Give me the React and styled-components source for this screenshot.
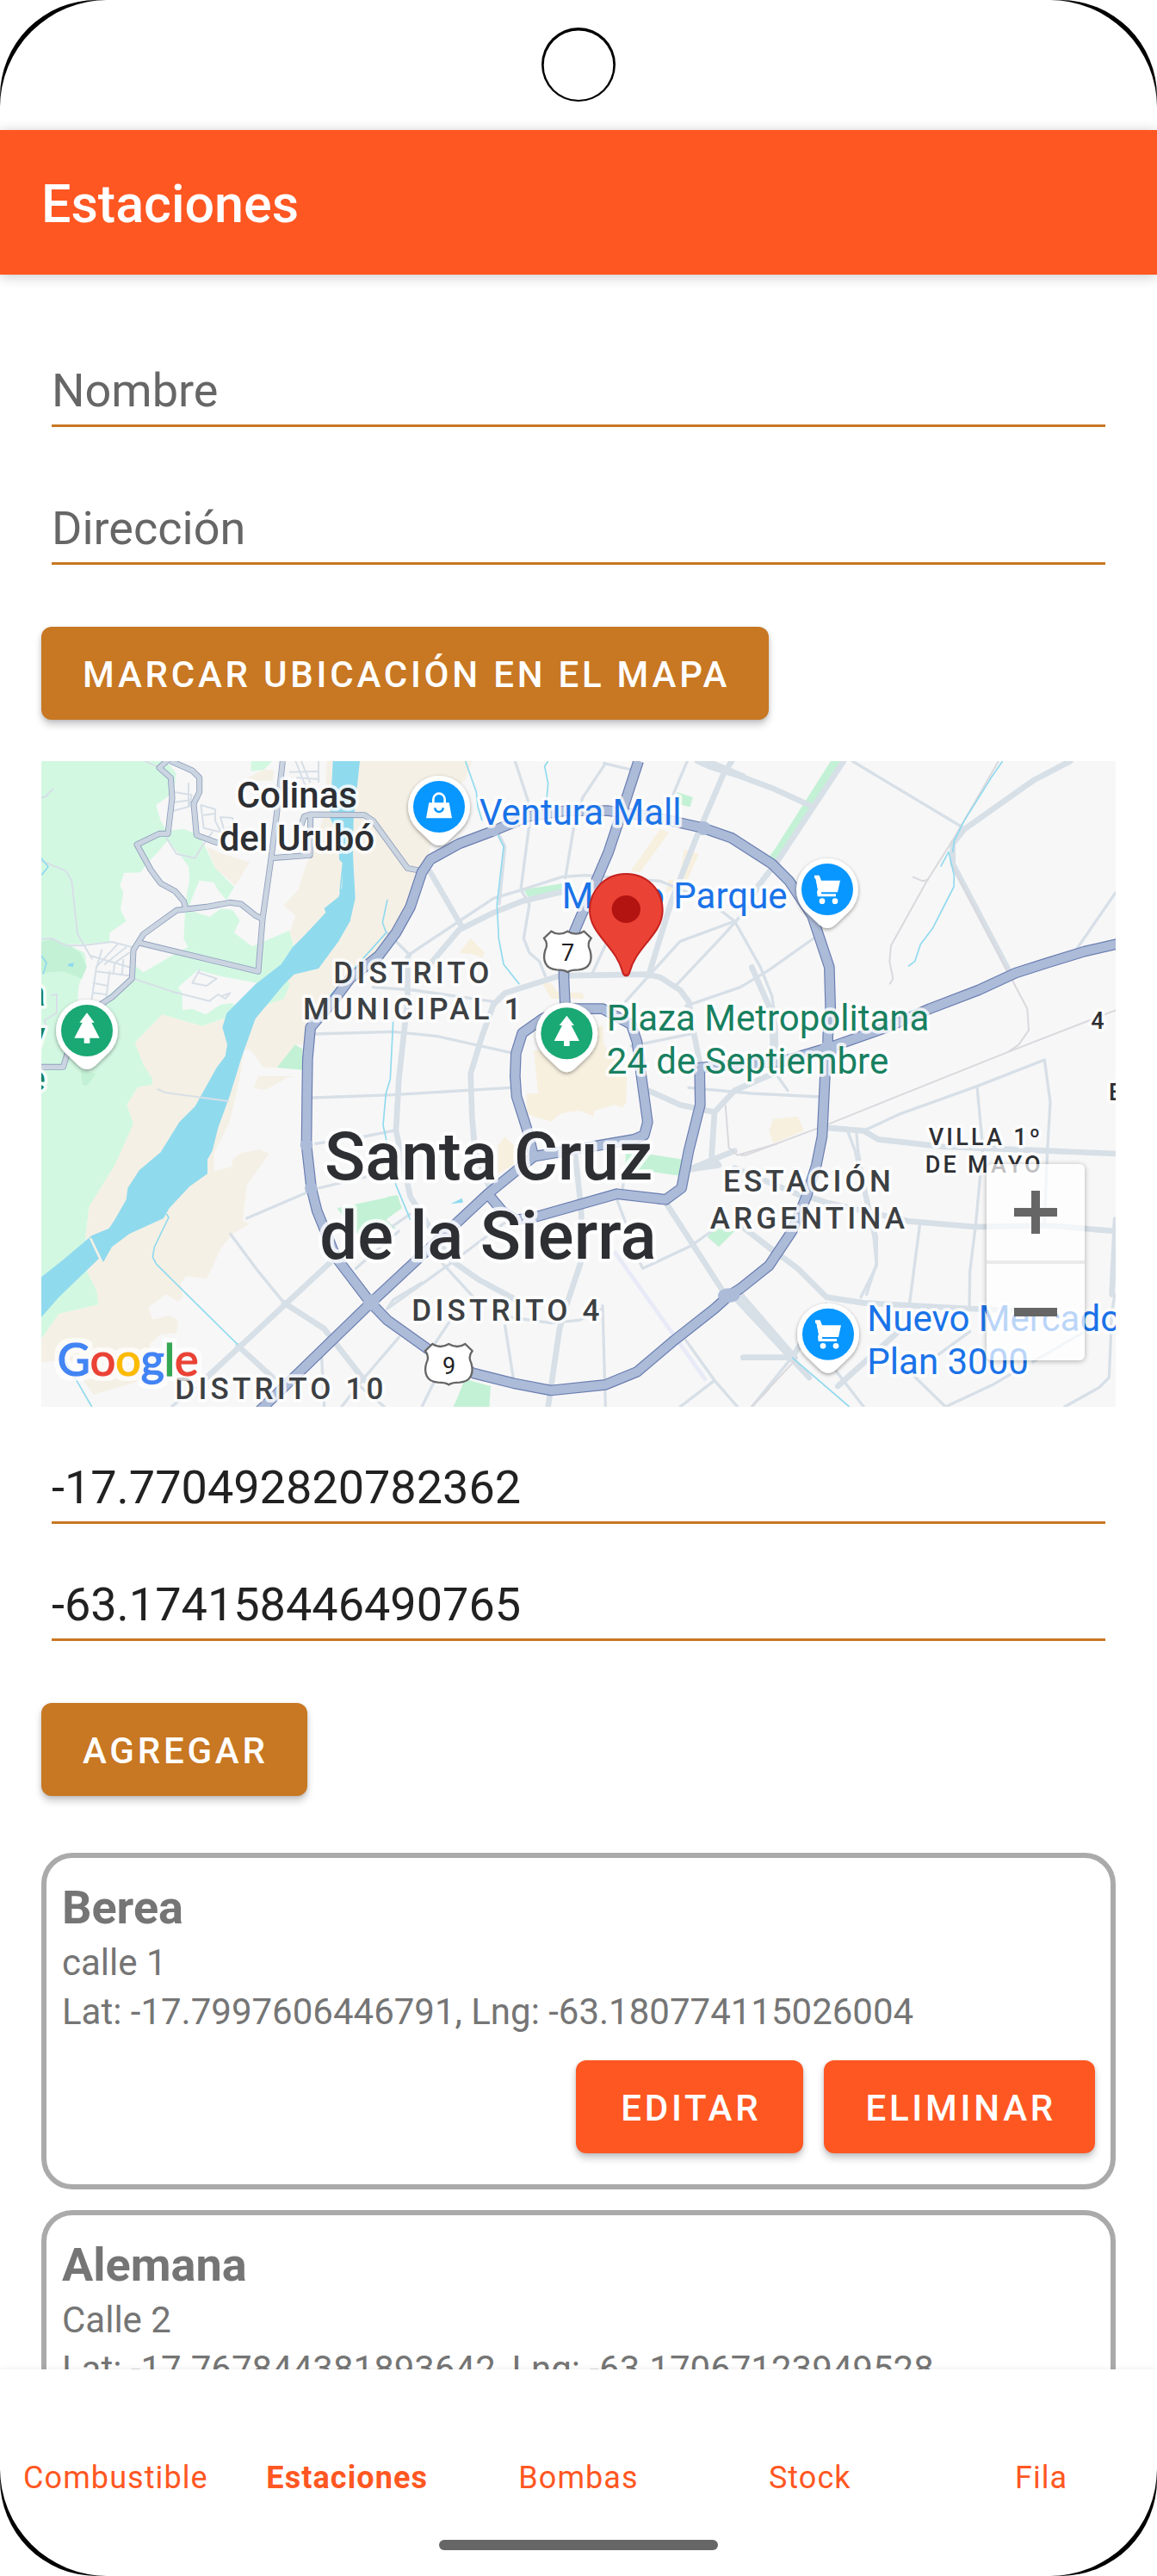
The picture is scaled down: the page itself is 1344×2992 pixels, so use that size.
import React, { useState } from "react";
import styled, { createGlobalStyle, css } from "styled-components";

const GlobalStyle = createGlobalStyle`
  *, *::before, *::after { box-sizing: border-box; }
  html, body { margin: 0; background: #fff; }
  body { font-family: Roboto, "Noto Sans", sans-serif; color: #212121; }
`;

const orange = "#ff5722";
const ochre = "#c87722";

/* ---------- Device shell ---------- */

const Device = styled.div`
  position: relative;
  display: flex;
  flex-direction: column;
  height: 100vh;
  overflow: hidden;
  background: #fff;
`;

const StatusBar = styled.div`
  flex: none;
  height: 151px;
  padding-top: 31px;
  display: flex;
  justify-content: center;
  align-items: flex-start;
`;

const CornerSvg = styled.svg`
  position: absolute;
  z-index: 3;
  width: 130px;
  height: 130px;
  pointer-events: none;
  ${(p) => (p.$bottom ? "bottom: 0;" : "top: 0;")}
  ${(p) => (p.$right ? "right: 0;" : "left: 0;")}
  transform: scale(${(p) => (p.$right ? -1 : 1)}, ${(p) => (p.$bottom ? -1 : 1)});
`;

const Corner = (props) => (
  <CornerSvg viewBox="0 0 130 130" aria-hidden="true" {...props}>
    <path d="M0 112A112 112 0 0 1 112 0H126A125 125 0 0 0 0 126Z" fill="#000" />
  </CornerSvg>
);

const AppBar = styled.header`
  flex: none;
  position: relative;
  z-index: 1;
  display: flex;
  align-items: center;
  height: 168px;
  padding: 4px 48px 0;
  background: ${orange};
  box-shadow: 0 2px 14px rgba(0, 0, 0, 0.22);
`;

const Title = styled.h1`
  margin: 0;
  font-size: 61px;
  line-height: 72px;
  font-weight: 500;
  color: #fff;
`;

const Content = styled.main`
  flex: 1;
  min-height: 0;
  overflow-y: auto;
  scrollbar-width: none;
  padding: 102px 48px 48px;
`;

/* ---------- Form ---------- */

const Fields = styled.div`
  display: flex;
  flex-direction: column;
  gap: ${(p) => p.$gap}px;
  padding: 0 12px;
`;

const TextInput = styled.input`
  display: block;
  width: 100%;
  height: 75px;
  padding: 0 0 8px;
  border: 0;
  border-bottom: 3px solid ${ochre};
  border-radius: 0;
  outline: 0;
  background: transparent;
  font: 400 54px/64px Roboto, "Noto Sans", sans-serif;
  color: #212121;
  &::placeholder { color: #666; opacity: 1; }
`;

const Button = styled.button`
  display: inline-flex;
  align-items: center;
  justify-content: center;
  height: 108px;
  min-width: 264px;
  padding: 3px 45px 0 48px;
  border: 0;
  border-radius: 12px;
  background: ${(p) => (p.$accent ? orange : ochre)};
  box-shadow: 0 6px 8px rgba(0, 0, 0, 0.2), 0 1px 4px rgba(0, 0, 0, 0.12);
  color: #fff;
  font: 500 42px/48px Roboto, "Noto Sans", sans-serif;
  letter-spacing: 0.09em;
  text-transform: uppercase;
  white-space: nowrap;
  cursor: pointer;
`;

const ButtonRow = styled.div`
  display: flex;
  justify-content: ${(p) => (p.$end ? "flex-end" : "flex-start")};
  gap: 24px;
  margin-top: ${(p) => p.$top}px;
`;

/* ---------- Map ---------- */

const MapFrame = styled.section`
  position: relative;
  height: 750px;
  margin: 48px 0 61px;
  overflow: hidden;
  background: #f7f7f7;
`;

const MapSvg = styled.svg`
  display: block;
  width: 100%;
  height: 100%;
`;

const Lines = styled.g`
  fill: none;
  stroke-linejoin: round;
  stroke-linecap: ${(p) => (p.$round ? "round" : "butt")};
  stroke: ${(p) => p.$color};
  stroke-width: ${(p) => p.$width};
`;

const MapText = styled.text`
  font-family: Roboto, "Noto Sans", sans-serif;
  paint-order: stroke;
  stroke: rgba(255, 255, 255, 0.8);
  stroke-width: 22px;
  stroke-linejoin: round;
  ${(p) => p.$kind === "city" && css`font-size: 234px; font-weight: 500; fill: #2d2f33; stroke-width: 26px;`}
  ${(p) => p.$kind === "town" && css`font-size: 126px; font-weight: 500; fill: #2d2f33;`}
  ${(p) => p.$kind === "district" && css`font-size: 105px; font-weight: 500; fill: #3c4043; letter-spacing: 0.12em;`}
  ${(p) => p.$kind === "suburb" && css`font-size: 81px; font-weight: 500; fill: #2d2f33; letter-spacing: 0.12em;`}
  ${(p) => p.$kind === "shop" && css`font-size: 126px; fill: #1a73e8;`}
  ${(p) => p.$kind === "park" && css`font-size: 126px; fill: #188060;`}
  ${(p) => p.$kind === "reserve" && css`font-size: 126px; font-weight: 500; fill: #188060;`}
`;

const ShieldText = styled.text`
  font: 400 81px Roboto, "Noto Sans", sans-serif;
  fill: #202124;
`;

const LogoText = styled.text`
  font: 400 156px Lato, Inter, sans-serif;
  stroke-width: 5px;
`;

const ZoomControls = styled.div`
  position: absolute;
  right: 36px;
  bottom: 54px;
  width: 114px;
  display: flex;
  flex-direction: column;
  border-radius: 6px;
  overflow: hidden;
  box-shadow: 0 1px 6px rgba(0, 0, 0, 0.3);
`;

const ZoomButton = styled.button`
  display: flex;
  align-items: center;
  justify-content: center;
  height: ${(p) => (p.$divided ? 116 : 112)}px;
  padding: 0;
  border: 0 solid rgba(230, 230, 230, 0.8);
  border-top-width: ${(p) => (p.$divided ? 4 : 0)}px;
  background: rgba(255, 255, 255, 0.7);
  background-clip: padding-box;
  cursor: pointer;
`;

const sand = [
  "1020,42 1525,42 1500,110 1420,160 1370,390 1340,430 1300,545 1240,650 1100,820 950,950 940,1030 908,1030 845,1110 798,1110 750,1045 730,1050 715,1150 680,1300 625,1410 625,1470 690,1455 690,1430 720,1408 785,1395 818,1410 740,1520 725,1640 750,1655 690,1690 650,1740 600,1846 530,1837 510,1860 518,1910 500,1925 460,1900 397,1945 412,1988 470,1975 500,1990 495,2035 440,2040 400,2075 440,2180 205,2250 165,2190 160,2130 24,2135 24,2055 85,1968 222,1936 185,1825 178,1700 190,1595 345,1306 322,1240 360,1178 412,1165 380,1100 350,1022 445,925 585,965 655,940 700,930 830,870 900,720 910,690 890,640 910,580 868,545 920,490 935,440 1010,230",
  "735,105 800,70 835,75 830,110 770,110",
  "600,340 640,360 750,395 700,475 630,415",
  "780,1140 915,1140 880,1145 830,1175 800,1187 765,1182",
];

const green = [
  "24,42 460,42 494,85 486,150 424,195 440,250 462,285 520,278 575,300 600,350 630,415 696,480 672,522 640,552 690,560 716,596 696,640 758,688 888,632 905,690 890,730 880,800 890,820 870,870 700,930 655,940 585,965 445,925 350,1022 380,1100 412,1150 410,1170 360,1178 322,1240 345,1306 280,1450 190,1595 178,1700 185,1825 218,1890 222,1936 85,1968 24,2055",
  "755,42 828,42 800,72 755,78",
];

const clearings = [
  "462,320 430,360 395,395 370,430 312,432 298,475 310,500 300,560 320,600 262,640 262,672 340,690 330,740 380,778 470,725 535,690 520,660 525,570 530,510 540,460 538,410 505,365",
  "575,458 625,464 640,492 668,525 690,560 650,556 610,585 538,560 545,530",
  "570,770 500,830 515,850 516,910 550,905 597,925 650,890 690,885 705,905 770,890 780,870 830,850 800,820 640,790",
  "115,680 165,680 262,672 340,690 340,790 230,880 150,880 155,820 182,760 175,710",
];

const parks = [
  "24,672 60,662 115,680 160,710 182,760 165,800 100,775 24,780",
  "845,1110 908,1030 934,1045 934,1118",
  "160,1120 215,1130 185,1172 168,1172",
  "1705,490 1840,468 1840,495 1720,515",
  "2240,150 2294,168 2285,202 2238,190",
  "2560,375 2580,350 2590,385",
  "2775,42 2830,42 2590,395 2558,384",
  "2060,1410 2130,1410 2260,1430 2250,1487 2060,1460",
  "1055,1600 1265,1555 1280,1600 1225,1640 1260,1670 1120,1690",
  "1230,1560 1265,1555 1280,1600 1230,1632",
  "2345,1700 2370,1670 2440,1680 2385,1735",
  "1395,2212 1470,2270 1500,2195 1590,2220 1585,2300 1455,2300 1470,2270",
];

const urban = [
  "1740,1050 1830,1050 1980,960 1985,1030 2065,1140 2062,1230 2050,1250 2020,1240 1950,1260 1950,1280 1900,1260 1835,1270 1800,1298 1740,1280 1715,1270 1715,1200 1755,1200",
  "1480,710 1520,660 1570,710 1560,728 1530,715",
  "1770,815 1800,815 1820,845 1910,850 1915,870 1800,870",
  "2180,280 2212,290 2110,430 2078,425",
  "2265,350 2315,365 2270,470 2200,500 2210,455 2245,455",
  "1615,1380 1640,1350 1670,1380 1670,1450 1615,1480",
  "2560,1330 2575,1290 2660,1280 2682,1330 2575,1375",
];

const river =
  "M1040,42 L1030,240 1060,300 1062,385 1075,400 1072,480 1060,515 1010,555 1015,570 940,650 900,690 860,750 770,820 670,920 655,970 672,1030 665,1070 635,1110 585,1200 560,1245 505,1300 440,1405 365,1468 325,1530 320,1570 280,1640 260,1670 200,1695 100,1780 24,1840 V1980 L85,1910 225,1775 240,1788 270,1735 330,1690 450,1635 470,1600 540,1525 603,1480 603,1430 620,1400 640,1320 680,1210 702,1140 720,1080 770,940 870,820 905,785 990,765 1060,670 1100,600 1118,520 1110,370 1112,250 1134,42Z";

const streams = [
  "1075,400 1065,500",
  "24,380 48,410 24,440",
  "24,720 42,745 30,785",
  "1230,525 1213,605 1226,640 1150,725 1030,860",
  "460,1620 468,1632 418,1735 412,1770 425,1795 708,2075",
  "90,2100 135,2180 200,2292",
  "1502,42 1540,150 1545,200 1560,250",
  "1790,42 1778,60 1790,120 1785,175",
  "1615,300 1635,340 1612,540 1618,660 1635,750 1690,820",
  "1250,950 1240,1150 1225,1200 1215,1310 1260,1520 1310,1640",
  "3374,42 3334,100 3240,250 3205,320 3200,360",
  "3158,410 3186,358 3205,440 3204,480 3130,625 3088,680 3068,740 3045,757",
  "2640,2120 2840,2292",
];

const lanes = [
  "24,390 110,425 130,460 150,645 200,730",
  "24,662 60,660 110,685 165,685 270,672 340,690",
  "24,170 40,165 64,140",
  "385,42 430,62",
  "345,800 480,845 610,878 640,855 665,870 682,850 655,860",
  "537,120 537,200",
  "485,215 540,200 548,160 486,150",
  "490,185 545,178",
  "580,195 630,210 630,250 650,290 590,275 580,195",
  "590,230 630,225",
  "648,237 690,240 695,270 660,280 648,237",
  "460,310 495,365 560,380 580,345 620,290",
  "195,720 330,760",
  "235,700 215,765 200,870",
  "290,680 215,760",
  "320,690 245,750",
  "330,710 280,745 275,780",
  "262,775 250,870",
  "215,775 330,790",
  "205,815 255,825",
  "205,850 250,855",
  "310,735 305,785",
  "575,770 550,815 600,825 635,800 575,780",
  "60,858 78,855 78,920 35,945 45,975",
  "910,42 945,130",
  "930,42 960,115",
  "890,80 990,78",
  "990,42 990,115",
  "430,1185 455,1197 675,1227",
  "915,100 990,105",
];

const minor = [
  "1675,42 1720,180 1725,260 1695,490 1725,540 1705,660 1725,710 1760,740 1780,790",
  "1985,50 2080,72",
  "1990,50 1910,170 1880,270 1850,450",
  "2275,42 2225,160",
  "1620,300 1640,340 1620,540",
  "1300,720 1480,600 1600,520 1700,490 1840,445 1920,440 2180,460 2350,530 2440,600 2530,760 2570,860 2585,960 2590,1090",
  "2100,560 2010,640 1940,790",
  "2060,880 2250,670 2440,600",
  "2560,425 2480,560 2400,650 2230,830",
  "2270,895 2460,830 2560,770 2715,660",
  "2080,1035 2300,990",
  "970,993 1250,985 1400,1000 1670,1060",
  "970,1215 1250,1205 1660,1180",
  "980,1375 1150,1350 1250,1330",
  "990,1530 1200,1480",
  "1180,830 1320,840 1600,880",
  "1230,640 1310,720",
  "683,1690 780,1820 870,1930",
  "740,1635 950,1545",
  "480,2290 560,2225",
  "1000,2100 1010,2292",
  "1230,1950 1250,1920 1350,1860",
  "1270,2050 1150,2190 1070,2292",
  "1110,2200 1220,2292",
  "1120,1810 1270,1680",
  "1230,1950 1440,1800 1640,1650",
  "1230,1675 1310,1620",
  "1420,1790 1530,1910",
  "1640,2010 1670,2200",
  "1980,1940 1990,2292",
  "1390,2080 1450,1990",
  "1350,2292 1440,2110",
  "1660,1980 1800,2000 1900,1990 1980,1950",
  "2110,1790 2120,1810 2290,1730 2360,1680",
  "2270,2060 2370,2200 2450,2292",
  "2370,2200 2250,2292",
  "2480,1680 2580,1760",
  "2030,1570 2060,1650",
  "2060,1450 2050,1530",
  "2280,1180 2500,1200 2740,1212",
  "2590,1140 2625,1190",
  "2850,42 3230,270",
  "3768,500 3630,700",
  "2890,1330 3020,1270 3285,1175 3520,1083 3540,1230 3530,1400 3520,1650",
  "3285,1175 3305,1390 3280,1660 3260,1820 3258,1950",
  "3085,1660 3050,1930",
  "2760,1315 2830,1320 2860,1400 2880,1500 2925,1700 2935,1800 2880,1910",
  "2865,1340 2870,1400 2900,1550 2935,1700 2935,1790 2900,1900",
  "2640,2120 2500,2292",
  "2780,2150 2890,2292",
  "3060,2180 3175,2292 3340,2215 3450,2150",
  "3260,2030 3150,2110",
  "3480,2135 3660,2030",
  "3765,1900 3755,1960 3745,2190 3710,2225 3590,2292",
];

const streets = [
  "2430,42 2400,90 2310,300 2220,530 2140,790",
  "2310,42 2350,60 2460,95 2580,140 2700,195",
  "2345,42 2470,95",
  "2820,42 2590,390 2520,480",
  "1370,760 1480,630 1600,570 1700,530 1850,495",
  "1380,430 1490,620",
  "1300,730 1300,880 1270,1150 1260,1330 1310,1560 1450,1780 1550,1850 1680,1920",
  "1600,890 1560,1000 1520,1130 1525,1280 1535,1400 1590,1540",
  "1600,890 1640,850 1830,790 2130,785 2180,795 2250,840 2280,880 2300,1000 2320,1100",
  "600,2190 1030,1790",
  "870,1930 1010,2020 1150,2200",
  "710,2080 830,2190",
  "1885,1420 1905,1600 1910,1770 1860,1920 1830,2020 1790,2292",
  "2440,1400 2280,1465",
  "2140,1190 2250,1240 2370,1265 2440,1190 2530,1150 2600,1120",
  "2370,1265 2360,1420 2385,1450 2280,1465",
  "2200,1580 2400,1890",
  "2440,1910 2700,2190",
  "2440,1460 2680,1560",
  "2700,1560 2760,1580 3045,1645 3280,1665 3530,1660 3768,1680",
  "2760,1320 2890,1330 2940,1360 3160,1385 3530,1400 3768,1410",
  "2460,1660 2580,1750 2660,1810 2760,1910 2890,1930 3260,1950 3500,1960",
  "3768,1640 3755,1900",
  "3610,42 3480,110 3240,280 3200,330 3200,400 3400,780",
  "2460,1900 2650,2120",
  "2470,2120 2640,2120 2760,1940",
  "2800,2220 3010,2030",
  "2500,760 2570,920 2575,1090",
];

const rails = [
  "3360,42 3205,310 3110,460 2985,685 2980,740 2992,800 2980,820",
  "3060,445 3095,460 3115,455",
  "3195,400 3460,905 3465,980 3430,1030 3395,1055",
  "3768,910 3395,1055 3020,1205 2760,1310 2480,1415 2460,1415",
  "2408,1240 2420,1390 2450,1415 2590,1375",
  "2660,2120 2500,2292",
  "2560,2230 2500,2292",
];

const secondary = [
  "475,30 435,65 475,100 480,170 465,295 435,295 357,333 405,420 440,468 490,495 520,530 528,558",
  "475,42 550,75 575,100 575,150 555,190 565,300 640,328",
  "230,890 270,865 340,800 345,700 380,645 495,562 600,550 680,535 720,540 770,580 795,592",
  "365,675 780,775 795,592 825,380 845,220 865,42",
  "825,380 960,370 962,230",
  "930,265 940,235 962,228 1150,230 1180,250 1300,415 1350,425",
  "24,1108 100,1108 115,1060",
];

const highways = [
  "950,1200 952,1080 962,970 1040,880 1100,800 1200,720 1260,640 1310,550 1350,430 1380,385 1480,330 1600,285 1720,235 1850,215 2000,215 2150,235 2330,275 2430,310 2570,400 2630,460 2710,580 2770,760 2774,900 2765,1000 2765,1050 2755,1140 2745,1350 2725,1450 2690,1560 2640,1680 2560,1800 2460,1880 2420,1905 2370,1950 2230,2060 2100,2170 1990,2215 1800,2235 1670,2210 1530,2175 1370,2090 1230,1990 1172,1930 1050,1770 985,1610 965,1530 948,1380 950,1200",
  "2105,42 2060,180 2000,360 1880,640 1845,720 1845,800 1850,905",
  "1850,905 1890,905 1980,905 2080,960 2100,1020 2115,1140 2137,1300 2125,1345 2090,1360 1740,1420 1715,1320 1680,1210 1675,1140 1678,1060 1700,990 1770,940 1850,905",
  "1740,1420 1580,1550 1172,1930 780,2310",
  "1580,1550 1630,1610 1680,1640 1740,1632 2030,1550 2200,1570 2255,1530 2280,1400 2320,1240 2318,1110 2500,1095 2600,1090 2770,1040 2970,970 3120,905 3290,840 3420,780 3530,745 3660,705 3790,675",
];

const polyline = (points) => <polyline key={points} points={points} />;
const polygon = (points) => <polygon key={points} points={points} />;

const pinShapes = {
  tree: (
    <path d="M0-62L26-28H16L44 26H10V44H-10V26H-44L-16-28H-26Z" fill="#fff" />
  ),
  bag: (
    <g>
      <path d="M-20-12V-26A20 20 0 0 1 20-26V-12" fill="none" stroke="#fff" strokeWidth="8" />
      <path d="M-35-14H35L45 40H-45Z" fill="#fff" />
      <path d="M-14 4A14 14 0 0 0 14 4" fill="none" stroke="#0896ff" strokeWidth="8" />
    </g>
  ),
  cart: (
    <g fill="#fff">
      <path d="M-45-49H-28L-21-31H45L36 10H-22L-24 16H30V25H-34L-36 8-33 0-40-38H-45Z" />
      <path d="M-38-45L-24 20" stroke="#fff" strokeWidth="9" />
      <circle cx="-18" cy="41" r="10" />
      <circle cx="27" cy="41" r="10" />
    </g>
  ),
};

const Poi = ({ x, y, icon }) => (
  <g transform={`translate(${x} ${y})`}>
    <path
      d="M-76 77A108 108 0 1 1 76 77L28 123Q0 147-28 123Z"
      fill="#fff"
      filter="url(#poiShadow)"
    />
    <circle r="90" fill={icon === "tree" ? "#1aa874" : "#0896ff"} />
    {pinShapes[icon]}
  </g>
);

const Shield = ({ x, y, number }) => (
  <g transform={`translate(${x} ${y})`}>
    <path
      d="M-57-70Q-30-52 0-70Q30-52 57-70L82-46Q66-26 78-4C88 30 78 62 38 64Q12 64 0 72Q-12 64-38 64C-78 62-88 30-78-4Q-66-26-82-46Z"
      fill="#fff"
      stroke="#666"
      strokeWidth="7"
    />
    <ShieldText x="-22" y="34">{number}</ShieldText>
  </g>
);

const labels = [
  ["town", 704, 205, "Colinas"],
  ["town", 644, 355, "del Urubó"],
  ["district", 1042, 815, "DISTRITO"],
  ["district", 936, 943, "MUNICIPAL 1"],
  ["shop", 1550, 265, "Ventura Mall"],
  ["shop", 1838, 554, "Macro Parque"],
  ["park", 1994, 981, "Plaza Metropolitana"],
  ["park", 1994, 1131, "24 de Septiembre"],
  ["city", 1011, 1500, "Santa Cruz"],
  ["city", 994, 1776, "de la Sierra"],
  ["district", 1315, 1993, "DISTRITO 4"],
  ["district", 490, 2265, "DISTRITO 10"],
  ["district", 2400, 1541, "ESTACIÓN"],
  ["district", 2354, 1670, "ARGENTINA"],
  ["suburb", 3116, 1379, "VILLA 1º"],
  ["suburb", 3104, 1475, "DE MAYO"],
  ["shop", 2902, 2028, "Nuevo Mercado"],
  ["shop", 2902, 2178, "Plan 3000"],
  ["suburb", 3682, 975, "4"],
  ["suburb", 3744, 1225, "B"],
];

const edgeLabels = [
  ["a", 893],
  ["y", 1040],
  ["e", 1190],
];

const logo = [
  ["G", "#4285f4"],
  ["o", "#ea4335"],
  ["o", "#fbbc05"],
  ["g", "#4285f4"],
  ["l", "#34a853"],
  ["e", "#ea4335"],
];

const StationMap = () => (
  <MapFrame aria-label="Mapa">
    <MapSvg viewBox="24 42 3744 2250" preserveAspectRatio="xMidYMid slice">
      <defs>
        <filter id="poiShadow" x="-20%" y="-20%" width="140%" height="150%">
          <feDropShadow dx="0" dy="5" stdDeviation="6" floodOpacity="0.4" />
        </filter>
        <filter id="logoHalo" x="-10%" y="-20%" width="120%" height="140%">
          <feMorphology in="SourceAlpha" operator="dilate" radius="14" result="grown" />
          <feFlood floodColor="#fff" floodOpacity="0.75" />
          <feComposite in2="grown" operator="in" result="halo" />
          <feMerge>
            <feMergeNode in="halo" />
            <feMergeNode in="SourceGraphic" />
          </feMerge>
        </filter>
      </defs>
      <g fill="#f5f0e5">{sand.map(polygon)}</g>
      <g fill="#d3f8e2">{green.map(polygon)}</g>
      <g fill="#f7f7f7">{clearings.map(polygon)}</g>
      <g fill="#c3f1d5">{parks.map(polygon)}</g>
      <g fill="#f7f0df">{urban.map(polygon)}</g>
      <path d={river} fill="#90daee" />
      <path d="M195 1704L236 1790" stroke="#f5f0e5" strokeWidth="8" />
      <path d="M120 748L138 745 134 760 115 755ZM1450 1585L1490 1565 1494 1580Z" fill="#90daee" />
      <Lines $color="#d7dfe7" $width={6} $round>{lanes.map(polyline)}</Lines>
      <Lines $color="#d7dfe7" $width={10} $round>{minor.map(polyline)}</Lines>
      <Lines $color="#d7dfe7" $width={20} $round>{streets.map(polyline)}</Lines>
      <Lines $color="#d9d9de" $width={6}>{rails.map(polyline)}</Lines>
      <Lines $color="#e8eaf8" $width={14}>{polyline("2020,1750 2340,2200")}</Lines>
      <Lines $color="#90daee" $width={5}>{streams.map(polyline)}</Lines>
      <Lines $color="#8f9ebd" $width={21}>{secondary.map(polyline)}</Lines>
      <Lines $color="#cbd5e1" $width={16}>{secondary.map(polyline)}</Lines>
      <Lines $color="#6a7db0" $width={38}>{highways.map(polyline)}</Lines>
      <Lines $color="#abbbd8" $width={31}>{highways.map(polyline)}</Lines>
      <g fill="#abbbd8">
        <circle cx="1174" cy="1928" r="28" />
        <circle cx="1600" cy="282" r="22" />
        <circle cx="2332" cy="276" r="24" />
        <circle cx="2765" cy="1050" r="32" />
        <ellipse cx="2420" cy="1904" rx="38" ry="25" />
        <circle cx="948" cy="1380" r="22" />
        <circle cx="964" cy="1530" r="22" />
      </g>

      {labels.map(([kind, x, y, text]) => (
        <MapText key={text} $kind={kind} x={x} y={y}>{text}</MapText>
      ))}
      {edgeLabels.map(([text, y]) => (
        <MapText key={text} $kind="reserve" x="38" y={y} textAnchor="end">{text}</MapText>
      ))}

      <Poi x={183} y={981} icon="tree" />
      <Poi x={1410} y={201} icon="bag" />
      <Poi x={2763} y={489} icon="cart" />
      <Poi x={1855} y={991} icon="tree" />
      <Poi x={2766} y={2039} icon="cart" />
      <Shield x={1858} y={705} number="7" />
      <Shield x={1444} y={2143} number="9" />

      <g transform="translate(2062 562)">
        <path
          d="M0-127C74-127 127-70 127 0C127 42 104 74 76 108C46 144 22 176 12 216Q8 228 0 228Q-8 228-12 216C-22 176-46 144-76 108C-104 74-127 42-127 0C-127-70-74-127 0-127Z"
          fill="#ea4335"
          stroke="#c5221f"
          strokeWidth="6"
        />
        <ellipse cy="-4" rx="50" ry="48" fill="#b31412" />
      </g>

      <LogoText x="80" y="2185" aria-label="Google" filter="url(#logoHalo)">
        {logo.map(([letter, color], i) => (
          <tspan key={i} fill={color} stroke={color}>{letter}</tspan>
        ))}
      </LogoText>
    </MapSvg>
    <ZoomControls>
      <ZoomButton type="button" aria-label="Acercar">
        <svg width="50" height="50" viewBox="0 0 50 50" aria-hidden="true">
          <path d="M20 0H30V20H50V30H30V50H20V30H0V20H20Z" fill="#666" />
        </svg>
      </ZoomButton>
      <ZoomButton type="button" aria-label="Alejar" $divided>
        <svg width="50" height="50" viewBox="0 0 50 50" aria-hidden="true">
          <path d="M0 20H50V30H0Z" fill="#666" />
        </svg>
      </ZoomButton>
    </ZoomControls>
  </MapFrame>
);

/* ---------- Station list ---------- */

const StationList = styled.ul`
  list-style: none;
  display: flex;
  flex-direction: column;
  gap: 24px;
  margin: 66px 0 0;
  padding: 0;
`;

const StationCard = styled.li`
  padding: 22px 18px 36px;
  border: 6px solid #aaa;
  border-radius: 36px;
  color: #757575;
`;

const StationName = styled.h2`
  margin: 0;
  font-size: 54px;
  line-height: 71px;
  font-weight: 700;
`;

const StationLine = styled.p`
  margin: 0;
  font-size: 42px;
  line-height: 57px;
`;

const stations = [
  { name: "Berea", street: "calle 1", lat: "-17.7997606446791", lng: "-63.180774115026004" },
  { name: "Alemana", street: "Calle 2", lat: "-17.767844381893642", lng: "-63.17067123949528" },
];

/* ---------- Bottom navigation ---------- */

const BottomBar = styled.footer`
  flex: none;
  position: relative;
  z-index: 2;
  display: flex;
  flex-direction: column;
  align-items: center;
  padding-bottom: 30px;
  background: #fff;
  box-shadow: 0 0 8px rgba(0, 0, 0, 0.08);
`;

const Tabs = styled.nav`
  display: flex;
  width: 100%;
`;

const Tab = styled.a`
  flex: 1 1 0;
  padding-top: 104px;
  font-size: 36px;
  line-height: 44px;
  font-weight: ${(p) => (p.$active ? 700 : 400)};
  letter-spacing: 0.03em;
  text-align: center;
  text-decoration: none;
  color: ${orange};
`;

const HomeHandle = styled.div`
  width: 324px;
  height: 12px;
  margin-top: 50px;
  border-radius: 6px;
  background: #666;
`;

const tabs = ["Combustible", "Estaciones", "Bombas", "Stock", "Fila"];

export default function App() {
  const [latitude, setLatitude] = useState("-17.770492820782362");
  const [longitude, setLongitude] = useState("-63.174158446490765");

  return (
    <>
      <GlobalStyle />
      <Device>
        <Corner />
        <Corner $right />
        <Corner $bottom />
        <Corner $right $bottom />
        <StatusBar>
          <svg width="88" height="88" viewBox="0 0 88 88" aria-hidden="true">
            <circle cx="44" cy="44" r="43" fill="#000" />
            <circle cx="44" cy="44.7" r="40.3" fill="#fff" />
          </svg>
        </StatusBar>
        <AppBar>
          <Title>Estaciones</Title>
        </AppBar>
        <Content>
          <Fields $gap={85}>
            <TextInput type="text" placeholder="Nombre" aria-label="Nombre" />
            <TextInput type="text" placeholder="Dirección" aria-label="Dirección" />
          </Fields>
          <ButtonRow $top={72}>
            <Button type="button">Marcar ubicación en el mapa</Button>
          </ButtonRow>
          <StationMap />
          <Fields $gap={61}>
            <TextInput
              type="text"
              aria-label="Latitud"
              value={latitude}
              onChange={(e) => setLatitude(e.target.value)}
            />
            <TextInput
              type="text"
              aria-label="Longitud"
              value={longitude}
              onChange={(e) => setLongitude(e.target.value)}
            />
          </Fields>
          <ButtonRow $top={72}>
            <Button type="button">Agregar</Button>
          </ButtonRow>
          <StationList>
            {stations.map((s) => (
              <StationCard key={s.name}>
                <StationName>{s.name}</StationName>
                <StationLine>{s.street}</StationLine>
                <StationLine>Lat: {s.lat}, Lng: {s.lng}</StationLine>
                <ButtonRow $end $top={28}>
                  <Button type="button" $accent>Editar</Button>
                  <Button type="button" $accent>Eliminar</Button>
                </ButtonRow>
              </StationCard>
            ))}
          </StationList>
        </Content>
        <BottomBar>
          <Tabs>
            {tabs.map((t) => (
              <Tab key={t} href={`#${t.toLowerCase()}`} $active={t === "Estaciones"}>
                {t}
              </Tab>
            ))}
          </Tabs>
          <HomeHandle />
        </BottomBar>
      </Device>
    </>
  );
}
